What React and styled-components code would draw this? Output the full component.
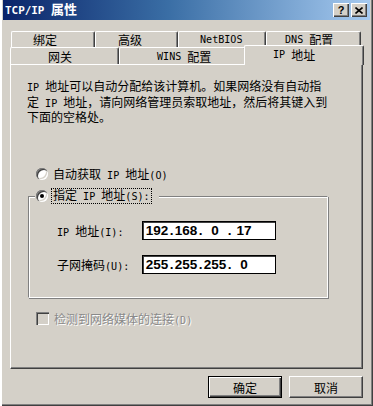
import React from 'react'
import styled, { createGlobalStyle } from 'styled-components'

const GlobalStyle = createGlobalStyle`
	body {
		margin: 0;
		background: #d4d0c8;
		font-family: "Noto Sans CJK SC", "DejaVu Sans", sans-serif;
		font-size: 12px;
		color: #000;
	}
`

// ASCII runs get a narrow monospace face, like the half-width Latin of the system font
const mix = text =>
	text.split(/([\x20-\x7e]+)/).map((part, i) =>
		/^[\x20-\x7e]+$/.test(part) ? <Latin key={i}>{part}</Latin> : part
	)

const tabsTop = [
	{ label: '绑定', w: 84, pad: 21 },
	{ label: '高级', w: 83, pad: 22 },
	{ label: 'NetBIOS', w: 88, pad: 21 },
	{ label: 'DNS 配置', w: 95, pad: 18 },
]

const tabsBottom = [
	{ label: '网关', w: 109, pad: 37 },
	{ label: 'WINS 配置', w: 127, pad: 37 },
	{ label: 'IP 地址', w: 120, pad: 28, active: true },
]

const IpAddress = ({ parts }) =>
	<IpBox>
		{parts.map((p, i) =>
			<React.Fragment key={i}>
				{i > 0 && <IpDot>.</IpDot>}
				<IpField>{p}</IpField>
			</React.Fragment>
		)}
	</IpBox>

const App = () =>
	<Window>
		<GlobalStyle />
		<TitleBar>
			<Title>{mix('TCP/IP 属性')}</Title>
			<CaptionButton>?</CaptionButton>
			<CaptionButton>
				<svg width="8" height="7" viewBox="0 0 8 7">
					<path d="M0.5 0.5 L7.5 6.5 M7.5 0.5 L0.5 6.5" stroke="#000" strokeWidth="1.6" fill="none" />
				</svg>
			</CaptionButton>
		</TitleBar>

		<TabRow $top={11} $left={8}>
			{tabsTop.map(t => <Tab key={t.label} $w={t.w} $pad={t.pad}>{mix(t.label)}</Tab>)}
		</TabRow>
		<TabRow $top={0} $left={7} $front>
			{tabsBottom.map(t => <Tab key={t.label} $w={t.w} $pad={t.pad} $active={t.active}>{mix(t.label)}</Tab>)}
		</TabRow>

		<Panel>
			<Description>
				{mix('IP 地址可以自动分配给该计算机。如果网络没有自动指')}<br />
				{mix('定 IP 地址，请向网络管理员索取地址，然后将其键入到')}<br />
				下面的空格处。
			</Description>

			<OptionRow $top={43}>
				<Radio />
				<span>{mix('自动获取 IP 地址(O)')}</span>
			</OptionRow>

			<Group>
				<Legend>
					<Radio $checked />
					<Focus>{mix('指定 IP 地址(S):')}</Focus>
				</Legend>
				<FieldRow $top={18}>
					<FieldLabel>{mix('IP 地址(I):')}</FieldLabel>
					<IpAddress parts={['192', '168', '0', '17']} />
				</FieldRow>
				<FieldRow $top={15}>
					<FieldLabel>{mix('子网掩码(U):')}</FieldLabel>
					<IpAddress parts={['255', '255', '255', '0']} />
				</FieldRow>
			</Group>

			<OptionRow $top={14}>
				<Checkbox />
				<Disabled>{mix('检测到网络媒体的连接(D)')}</Disabled>
			</OptionRow>
		</Panel>

		<Buttons>
			<Button $default>确定</Button>
			<Button>取消</Button>
		</Buttons>
	</Window>

const Window = styled.div`
	width: 373px;
	height: 406px;
	box-sizing: border-box;
	padding: 0 3px 3px 3px;
	background: #d4d0c8;
	display: flex;
	flex-direction: column;
	box-shadow: inset 2px 0 #fff, inset -1px -1px #404040, inset -2px -2px #808080;
`
const Latin = styled.span`
	font-family: "DejaVu Sans Mono", "Liberation Mono", monospace;
	font-size: 0.84em;
	white-space: pre;
`
const TitleBar = styled.div`
	height: 20px;
	display: flex;
	align-items: center;
	gap: 2px;
	padding: 0 3px 0 2px;
	background: linear-gradient(90deg, #0a246a 0%, #3a6ea5 45%, #a6caf0 100%);
`
const Title = styled.div`
	flex: 1;
	color: #fff;
	font-weight: 700;
	font-size: 13px;
	line-height: 20px;
`
const CaptionButton = styled.div`
	width: 16px;
	height: 14px;
	box-sizing: border-box;
	display: flex;
	align-items: center;
	justify-content: center;
	background: #d4d0c8;
	font-family: "Liberation Sans", sans-serif;
	font-weight: 700;
	font-size: 11px;
	box-shadow: inset 1px 1px #fff, inset -1px -1px #404040, inset -2px -2px #808080;
`
const TabRow = styled.div`
	display: flex;
	height: ${p => (p.$front ? 17 : 16)}px;
	margin: ${p => p.$top}px 0 0 ${p => p.$left}px;
	position: relative;
	z-index: ${p => (p.$front ? 2 : 1)};
`
const Tab = styled.div`
	box-sizing: border-box;
	width: ${p => p.$w}px;
	height: 100%;
	padding-left: ${p => p.$pad}px;
	display: flex;
	align-items: center;
	white-space: nowrap;
	background: #d4d0c8;
	border: 1px solid #fff;
	border-right-color: #404040;
	border-bottom: none;
	border-radius: 2px 2px 0 0;
	box-shadow: inset -1px 0 #808080;

	${p => p.$active && `
		height: 20px;
		align-self: flex-end;
		margin: 0 0 -1px -2px;
		padding-bottom: 2px;
		position: relative;
		z-index: 3;
	`}
`
const Panel = styled.div`
	box-sizing: border-box;
	width: 353px;
	height: 305px;
	margin-left: 7px;
	display: flex;
	flex-direction: column;
	align-items: flex-start;
	border: 1px solid #fff;
	border-right-color: #404040;
	border-bottom-color: #404040;
	box-shadow: inset -1px -1px #808080;
	position: relative;
	z-index: 1;
`
const Description = styled.p`
	margin: 14px 0 0 16px;
	line-height: 13.5px;
	white-space: nowrap;
`
const OptionRow = styled.div`
	display: flex;
	align-items: center;
	gap: 5px;
	height: 14px;
	margin: ${p => p.$top}px 0 0 25px;
	white-space: nowrap;
`
const Radio = styled.span`
	flex: none;
	width: 12px;
	height: 12px;
	border-radius: 50%;
	background: #fff;
	position: relative;
	box-shadow: inset 1px 1px #808080, inset 2px 2px #404040, inset -1px -1px #fff, inset -2px -2px #d4d0c8;

	&::after {
		content: '';
		display: ${p => (p.$checked ? 'block' : 'none')};
		position: absolute;
		left: 4px;
		top: 4px;
		width: 4px;
		height: 4px;
		border-radius: 50%;
		background: #000;
	}
`
const Checkbox = styled.span`
	flex: none;
	width: 13px;
	height: 13px;
	background: #d4d0c8;
	box-shadow: inset 1px 1px #808080, inset 2px 2px #404040, inset -1px -1px #fff, inset -2px -2px #d4d0c8;
`
const Disabled = styled.span`
	color: #8a8a8a;
	text-shadow: 1px 1px 0 #fff;
`
const Group = styled.div`
	box-sizing: border-box;
	width: 300px;
	height: 102px;
	margin: 15px 0 0 17px;
	border: 1px solid #808080;
	border-right-color: #fff;
	border-bottom-color: #fff;
	box-shadow: inset 1px 1px #fff, 1px 1px #808080;
	display: flex;
	flex-direction: column;
	align-items: flex-start;
`
const Legend = styled.div`
	display: flex;
	align-items: center;
	gap: 3px;
	height: 14px;
	margin: -8px 0 0 6px;
	padding: 0 7px 0 1px;
	background: #d4d0c8;
	white-space: nowrap;
`
const Focus = styled.span`
	border: 1px dotted #000;
	padding: 0 1px;
	line-height: 12px;
`
const FieldRow = styled.div`
	display: flex;
	align-items: center;
	margin: ${p => p.$top}px 0 0 28px;
`
const FieldLabel = styled.span`
	width: 85px;
	white-space: nowrap;
`
const IpBox = styled.div`
	box-sizing: border-box;
	width: 134px;
	height: 19px;
	padding-left: 1px;
	display: flex;
	align-items: center;
	background: #fff;
	border: 1px solid #000;
	box-shadow: inset 1px 1px #404040;
	font-family: "Liberation Sans", Arial, sans-serif;
	font-weight: 700;
	font-size: 13.5px;
`
const IpField = styled.span`
	width: 26px;
	text-align: center;
`
const IpDot = styled.span`
	width: 3px;
	display: flex;
	justify-content: center;
`
const Buttons = styled.div`
	display: flex;
	justify-content: flex-end;
	gap: 7px;
	margin-top: 7px;
	padding-right: 7px;
`
const Button = styled.div`
	box-sizing: border-box;
	width: 74px;
	height: 22px;
	display: flex;
	align-items: center;
	justify-content: center;
	background: #d4d0c8;
	border: 1px solid ${p => (p.$default ? '#000' : '#fff')};
	${p => !p.$default && 'border-right-color: #404040; border-bottom-color: #404040;'}
	box-shadow: ${p => (p.$default
		? 'inset 1px 1px #fff, inset -1px -1px #404040, inset -2px -2px #808080'
		: 'inset -1px -1px #808080')};
`

export default App
